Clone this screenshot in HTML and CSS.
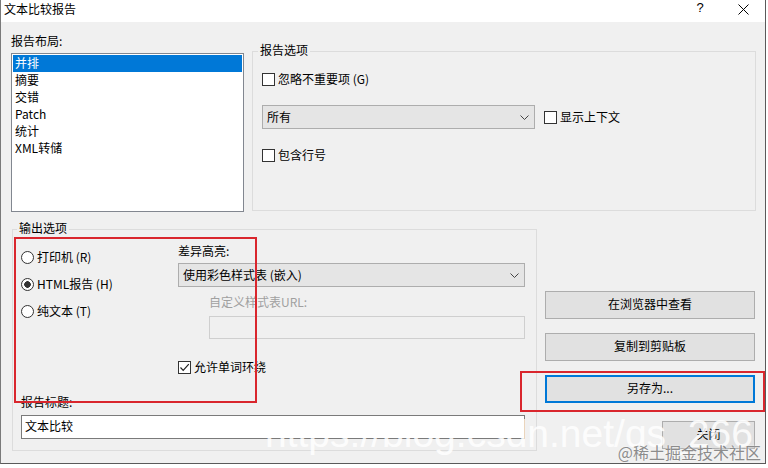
FILE: index.html
```html
<!DOCTYPE html>
<html lang="zh-CN">
<head>
    <meta charset="UTF-8">
    <meta name="viewport" content="width=device-width, initial-scale=1.0">
    <title>文本比较报告</title>
    <link rel="stylesheet" href="styles.css">
</head>
<body>
<div class="window">
    <div class="titlebar">
        <span class="title">文本比较报告</span>
        <span class="tb-btn help">?</span>
        <span class="tb-btn close">
            <svg width="11" height="11" viewBox="0 0 11 11"><path d="M0.5 0.5L10.5 10.5M10.5 0.5L0.5 10.5" stroke="#000" stroke-width="1" fill="none"/></svg>
        </span>
    </div>

    <div class="content">
        <div class="row top-row">
            <div class="layout-col">
                <div class="label">报告布局:</div>
                <ul class="listbox">
                    <li class="selected">并排</li>
                    <li>摘要</li>
                    <li>交错</li>
                    <li>Patch</li>
                    <li>统计</li>
                    <li>XML转储</li>
                </ul>
            </div>

            <fieldset class="group report-options">
                <legend>报告选项</legend>
                <div class="check-row ignore"><span class="check"></span>忽略不重要项 (G)</div>
                <div class="combo-row">
                    <div class="combo scope">
                        <span>所有</span>
                        <svg class="chevron" width="9" height="5" viewBox="0 0 9 5"><path d="M0.5 0.5L4.5 4.5L8.5 0.5" stroke="#444" fill="none"/></svg>
                    </div>
                    <div class="check-row context"><span class="check"></span>显示上下文</div>
                </div>
                <div class="check-row line-no"><span class="check"></span>包含行号</div>
            </fieldset>
        </div>

        <div class="row bottom-row">
            <fieldset class="group output-options">
                <legend>输出选项</legend>
                <div class="output-top">
                    <div class="radios">
                        <div class="radio-row"><span class="radio"></span>打印机 (R)</div>
                        <div class="radio-row"><span class="radio on"></span>HTML报告 (H)</div>
                        <div class="radio-row"><span class="radio"></span>纯文本 (T)</div>
                    </div>
                    <div class="highlight">
                        <div class="label">差异高亮:</div>
                        <div class="combo style-combo">
                            <span>使用彩色样式表 (嵌入)</span>
                            <svg class="chevron" width="9" height="5" viewBox="0 0 9 5"><path d="M0.5 0.5L4.5 4.5L8.5 0.5" stroke="#444" fill="none"/></svg>
                        </div>
                        <div class="label disabled url-label">自定义样式表URL:</div>
                        <div class="url-box"></div>
                        <div class="check-row wrap"><span class="check on">
                            <svg width="11" height="11" viewBox="0 0 11 11"><path d="M1.5 5.5L4.2 8.3L9.8 2.2" stroke="#222" stroke-width="1.2" fill="none"/></svg>
                        </span>允许单词环绕</div>
                    </div>
                </div>
                <div class="label title-label">报告标题:</div>
                <div class="textbox">文本比较</div>
            </fieldset>

            <div class="actions">
                <button>在浏览器中查看</button>
                <button>复制到剪贴板</button>
                <button class="focused">另存为...</button>
                <button class="close-btn">关闭</button>
            </div>
        </div>
    </div>

    <div class="mark mark-a"></div>
    <div class="mark mark-b"></div>
    <div class="watermark">https://blog.csdn.net/qs_266</div>
    <div class="watermark-cn">@稀土掘金技术社区</div>
</div>
</body>
</html>
```

FILE: styles.css
```css
html, body {
    margin: 0;
    padding: 0;
    background: #fff;
}

body {
    font-family: "Noto Sans CJK SC", "Noto Sans", sans-serif;
    font-size: 12px;
    color: #000;
}

.window {
    position: relative;
    width: 766px;
    height: 464px;
    box-sizing: border-box;
    border-left: 1px solid #7a7a7a;
    border-right: 1px solid #5a5a5a;
    border-bottom: 1px solid #5a5a5a;
    background: #f0f0f0;
    overflow: hidden;
}

.titlebar {
    display: flex;
    align-items: flex-start;
    height: 22px;
    background: #fff;
}
.title {
    padding: 1px 0 0 3px;
    line-height: 16px;
}
.tb-btn {
    display: flex;
    justify-content: center;
}
.help {
    margin-left: auto;
    width: 44px;
    font-family: "Liberation Sans", sans-serif;
    font-size: 13px;
    line-height: 16px;
}
.close {
    width: 43px;
    padding-top: 4px;
}

.content {
    padding: 12px 0 0 10px;
}

.row {
    display: flex;
    align-items: flex-start;
}

.label {
    height: 16px;
    line-height: 14px;
}
.disabled {
    color: #a0a0a0;
}

/* report layout list */
.layout-col {
    width: 233px;
}
.listbox {
    margin: 3px 0 0;
    padding: 1px;
    height: 159px;
    box-sizing: border-box;
    list-style: none;
    background: #fff;
    border: 1px solid #828790;
}
.listbox li {
    height: 17px;
    line-height: 15px;
    padding-left: 2px;
}
.listbox .selected {
    background: #0078d7;
    color: #fff;
}

/* group boxes */
.group {
    margin: 0;
    box-sizing: border-box;
    border: 1px solid #dcdcdc;
    min-width: 0;
}
.group legend {
    margin-left: -4px;
    padding: 0 2px 2px;
    line-height: 14px;
}

.report-options {
    margin: 9px 0 0 8px;
    width: 504px;
    height: 168px;
    padding: 0 0 0 9px;
}

.check-row {
    display: flex;
    align-items: center;
    height: 16px;
    line-height: 14px;
    white-space: nowrap;
}
.check {
    display: flex;
    align-items: center;
    justify-content: center;
    width: 13px;
    height: 13px;
    box-sizing: border-box;
    border: 1px solid #333;
    background: #fff;
    margin-right: 3px;
}
.ignore {
    margin-top: 12px;
}
.line-no {
    margin-top: 18px;
}

.combo-row {
    display: flex;
    align-items: center;
    margin-top: 18px;
}
.combo {
    display: flex;
    align-items: center;
    justify-content: space-between;
    height: 24px;
    box-sizing: border-box;
    padding: 0 5px 2px 4px;
    background: #e5e5e5;
    border: 1px solid #adadad;
}
.chevron {
    margin-top: 2px;
}
.scope {
    width: 273px;
}
.context {
    margin-left: 9px;
}

/* output options */
.bottom-row {
    margin-top: 9px;
}
.output-options {
    margin: 0 0 0 1px;
    width: 525px;
    height: 230px;
    padding: 0 11px 0 8px;
}
.output-top {
    display: flex;
}
.radios {
    width: 157px;
    padding-top: 12px;
    display: flex;
    flex-direction: column;
    gap: 11px;
}
.radio-row {
    display: flex;
    align-items: center;
    height: 16px;
    line-height: 14px;
}
.radio {
    width: 13px;
    height: 13px;
    box-sizing: border-box;
    border: 1px solid #333;
    border-radius: 50%;
    background: #fff;
    margin-right: 3px;
}
.radio.on {
    background: radial-gradient(circle, #333 0 3px, #fff 3.6px);
}

.highlight {
    flex: 1;
    padding-top: 7px;
}
.style-combo {
    margin-top: 3px;
}
.url-label {
    margin: 8px 0 0 31px;
}
.url-box {
    margin: 5px 0 0 31px;
    height: 23px;
    box-sizing: border-box;
    border: 1px solid #cfcfcf;
}
.wrap {
    margin-top: 20px;
}

.title-label {
    margin-top: 20px;
}
.textbox {
    margin-top: 4px;
    height: 24px;
    line-height: 20px;
    box-sizing: border-box;
    padding-left: 3px;
    background: #fff;
    border: 1px solid #7a7a7a;
}

/* buttons */
.actions {
    margin-left: 8px;
    width: 210px;
    height: 228px;
    display: flex;
    flex-direction: column;
    justify-content: flex-end;
    gap: 14px;
}
.actions button {
    height: 28px;
    box-sizing: border-box;
    border: 1px solid #adadad;
    background: #e1e1e1;
    font: inherit;
    line-height: 14px;
    color: #000;
    padding: 0 0 2px;
}
.actions .focused {
    border: 2px solid #0078d7;
}
.actions .close-btn {
    align-self: flex-end;
    width: 93px;
    margin-top: 4px;
}

/* annotation overlays */
.mark {
    position: absolute;
    box-sizing: border-box;
    border: 2px solid #d9262d;
}
.mark-a {
    left: 13px;
    top: 237px;
    width: 243px;
    height: 166px;
}
.mark-b {
    left: 519px;
    top: 371px;
    width: 245px;
    height: 41px;
}

.watermark {
    position: absolute;
    left: 264px;
    top: 414px;
    font-family: "Liberation Sans", sans-serif;
    font-size: 39px;
    line-height: 39px;
    color: rgba(255, 255, 255, 0.85);
    white-space: nowrap;
}
.watermark-cn {
    position: absolute;
    right: 4px;
    top: 443px;
    font-size: 16px;
    line-height: 18px;
    color: #8c8c8c;
    text-shadow: 0 0 2px #fff;
    white-space: nowrap;
}
```
